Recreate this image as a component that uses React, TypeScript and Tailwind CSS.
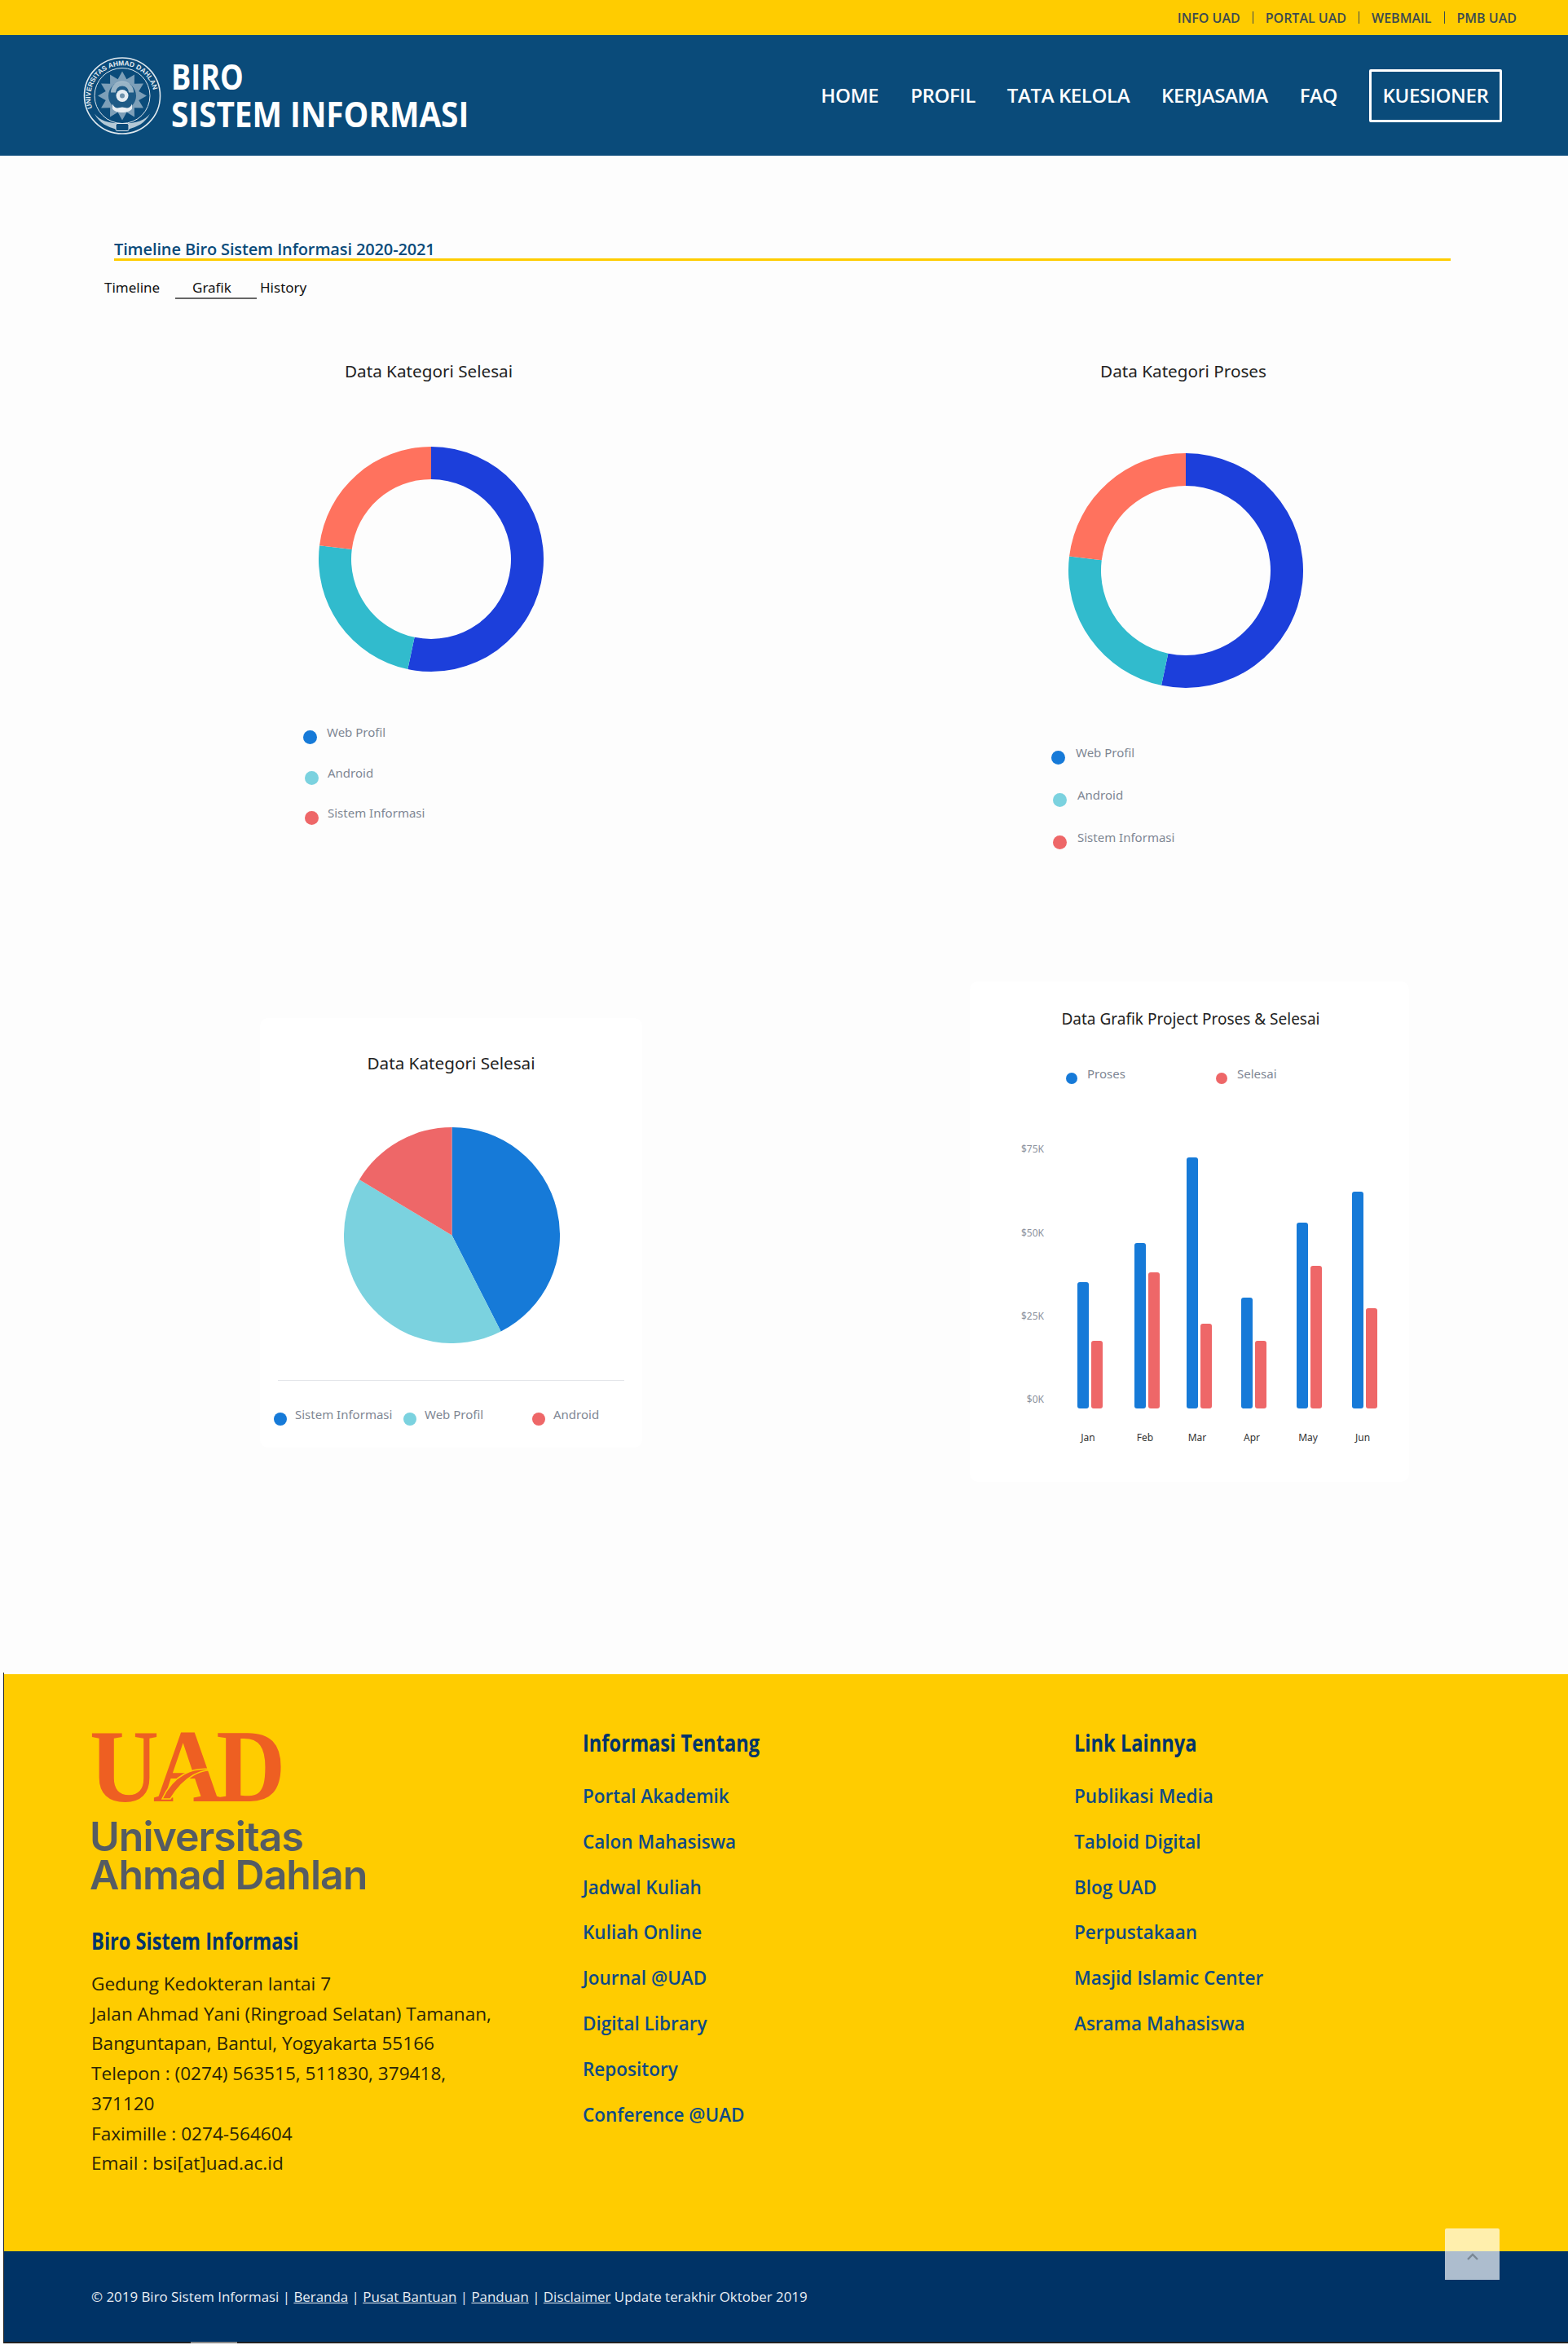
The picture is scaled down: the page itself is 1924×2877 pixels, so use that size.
const topLinks = ['INFO UAD', 'PORTAL UAD', 'WEBMAIL', 'PMB UAD'];
const navItems = ['HOME', 'PROFIL', 'TATA KELOLA', 'KERJASAMA', 'FAQ'];
const infoLinks = ['Portal Akademik', 'Calon Mahasiswa', 'Jadwal Kuliah', 'Kuliah Online', 'Journal @UAD', 'Digital Library', 'Repository', 'Conference @UAD'];
const otherLinks = ['Publikasi Media', 'Tabloid Digital', 'Blog UAD', 'Perpustakaan', 'Masjid Islamic Center', 'Asrama Mahasiswa'];
const addressLines = [
  'Gedung Kedokteran lantai 7',
  'Jalan Ahmad Yani (Ringroad Selatan) Tamanan,',
  'Banguntapan, Bantul, Yogyakarta 55166',
  'Telepon : (0274) 563515, 511830, 379418,',
  '371120',
  'Faximille : 0274-564604',
  'Email : bsi[at]uad.ac.id',
];

const BLUE = '#167ad8';
const TEAL = '#7bd2df';
const RED = '#ee6768';

const bars = [
  { month: 'Jan', labelX: 1335, blueX: 1322, blueTop: 1573, redX: 1339, redTop: 1645 },
  { month: 'Feb', labelX: 1405, blueX: 1392, blueTop: 1525, redX: 1409, redTop: 1561 },
  { month: 'Mar', labelX: 1469, blueX: 1456, blueTop: 1420, redX: 1473, redTop: 1624 },
  { month: 'Apr', labelX: 1536, blueX: 1523, blueTop: 1592, redX: 1540, redTop: 1645 },
  { month: 'May', labelX: 1605, blueX: 1591, blueTop: 1500, redX: 1608, redTop: 1553 },
  { month: 'Jun', labelX: 1672, blueX: 1659, blueTop: 1462, redX: 1676, redTop: 1605 },
];

function polar(c: number, r: number, deg: number) {
  const a = ((deg - 90) * Math.PI) / 180;
  return [c + r * Math.cos(a), c + r * Math.sin(a)];
}

function ringPath(c: number, outer: number, inner: number, from: number, to: number) {
  const large = to - from > 180 ? 1 : 0;
  const [x1, y1] = polar(c, outer, from);
  const [x2, y2] = polar(c, outer, to);
  const [x3, y3] = polar(c, inner, to);
  const [x4, y4] = polar(c, inner, from);
  if (inner === 0) return `M${c} ${c}L${x1} ${y1}A${outer} ${outer} 0 ${large} 1 ${x2} ${y2}Z`;
  return `M${x1} ${y1}A${outer} ${outer} 0 ${large} 1 ${x2} ${y2}L${x3} ${y3}A${inner} ${inner} 0 ${large} 0 ${x4} ${y4}Z`;
}

function Donut({ size, inner }: { size: number; inner: number }) {
  const c = size / 2;
  return (
    <svg width={size} height={size} viewBox={`0 0 ${size} ${size}`} className="block">
      <path d={ringPath(c, c, inner, 0, 192)} fill="#1c3fdb" />
      <path d={ringPath(c, c, inner, 192, 277)} fill="#31bbcd" />
      <path d={ringPath(c, c, inner, 277, 360)} fill="#ff725e" />
    </svg>
  );
}

function LegendText({ children }: { children: string }) {
  return <span className="text-[15px] leading-[24px] text-[#7f8794] whitespace-nowrap">{children}</span>;
}

function Seal() {
  const star = [];
  for (let i = 0; i < 24; i++) {
    const [x, y] = polar(48, i % 2 === 0 ? 30 : 21, i * 15);
    star.push(`${x},${y}`);
  }
  return (
    <svg width="96" height="97" viewBox="0 0 96 96" className="shrink-0">
      <defs>
        <path id="sealArc" d="M12.5 66A39 39 0 1 1 83.5 66" />
      </defs>
      <circle cx="48" cy="48" r="46.5" fill="none" stroke="#dfe8ee" strokeWidth="1.6" />
      <circle cx="48" cy="48" r="34" fill="none" stroke="#dfe8ee" strokeWidth="1" />
      <text fill="#e6edf2" className="text-[8.4px] font-bold" style={{ fontFamily: '"Liberation Sans", sans-serif' }}>
        <textPath href="#sealArc" startOffset="2%">UNIVERSITAS AHMAD DAHLAN</textPath>
      </text>
      <polygon points={star.join(' ')} fill="#c9d7e1" opacity="0.6" />
      <circle cx="48" cy="48" r="17" fill="#1d5a86" />
      <path d="M34 44A14 14 0 0 1 62 44L56 44A8 8 0 0 0 40 44Z" fill="#b9cad6" opacity="0.8" />
      <circle cx="48" cy="48" r="7.5" fill="#e6edf2" />
      <circle cx="48" cy="48" r="3" fill="#6f93ac" />
      <path d="M36 58C40 66 44 62 48 62C52 62 56 66 60 58L60 64C56 70 40 70 36 64Z" fill="#e6edf2" />
      <path d="M14 70C20 82 30 86 40 89L56 89C66 86 76 82 82 70C76 78 66 82 48 82C30 82 20 78 14 70Z" fill="#dfe8ee" opacity="0.8" />
      <rect x="40" y="82" width="16" height="9" rx="2" fill="#0a4b7a" stroke="#dfe8ee" strokeWidth="1" />
    </svg>
  );
}

export default function App() {
  return (
    <div className="relative w-[1924px] h-[2877px] overflow-hidden bg-white" style={{ fontFamily: '"Open Sans", sans-serif' }}>
      {/* top strip */}
      <div className="h-[43px] bg-[#ffcc00] flex items-center justify-end pr-[63px]">
        {topLinks.map((link, i) => (
          <div key={link} className="flex items-center">
            {i > 0 && <span className="mx-[15px] h-[15px] w-px bg-[#3c4a50]" />}
            <a className="text-[16px] font-semibold leading-none text-[#3c4a50] whitespace-nowrap">{link}</a>
          </div>
        ))}
      </div>

      {/* header */}
      <header className="h-[148px] bg-[#0a4b7a] flex items-center pl-[102px] pr-[81px]">
        <Seal />
        <div className="ml-[12px] text-white font-bold text-[43px] leading-[46px]">
          <div className="origin-left scale-x-[0.84] whitespace-nowrap">BIRO</div>
          <div className="origin-left scale-x-[0.9] whitespace-nowrap">SISTEM INFORMASI</div>
        </div>
        <nav className="ml-auto flex items-center gap-[39px] text-white text-[24px] font-semibold tracking-[-0.4px]">
          {navItems.map((item) => (
            <a key={item} className="whitespace-nowrap">{item}</a>
          ))}
          <a className="h-[65px] w-[163px] flex items-center justify-center border-[3px] border-white rounded-[2px] whitespace-nowrap">KUESIONER</a>
        </nav>
      </header>

      {/* content */}
      <main className="h-[1861px] bg-[#fdfdfd] pt-[103px]">
        <div className="ml-[140px] w-[1640px] border-b-[3px] border-[#ffcc00] text-[20px] leading-[23px] font-semibold tracking-[-0.13px] text-[#0a4b7a]">
          Timeline Biro Sistem Informasi 2020-2021
        </div>

        <div style={{ fontFamily: '"Noto Sans", sans-serif' }}>
          <div className="mt-[20px] ml-[128px] flex h-[27px] text-[17px] leading-[26px] text-[#111]">
            <span className="w-[87px]">Timeline</span>
            <span className="w-[100px] pl-[21px] border-b-2 border-[#666]">Grafik</span>
            <span className="ml-[4px]">History</span>
          </div>

          <div className="flex pl-[126px]">
            <section className="w-[800px] mr-[126px]">
              <h3 className="mt-[74px] text-center text-[20.7px] leading-[28px] text-[#222]">Data Kategori Selesai</h3>
              <div className="mt-[79px] ml-[265px]">
                <Donut size={276} inner={98} />
              </div>
              <ul className="mt-[62px] flex flex-col gap-[25.5px]">
                <li className="flex h-[24px] ml-[246px]">
                  <span className="mt-[10px] mr-[12px] size-[17px] rounded-full" style={{ background: BLUE }} />
                  <LegendText>Web Profil</LegendText>
                </li>
                <li className="flex h-[24px] ml-[248px]">
                  <span className="mt-[10px] mr-[11px] size-[17px] rounded-full" style={{ background: TEAL }} />
                  <LegendText>Android</LegendText>
                </li>
                <li className="flex h-[24px] ml-[248px]">
                  <span className="mt-[10px] mr-[11px] size-[17px] rounded-full" style={{ background: RED }} />
                  <LegendText>Sistem Informasi</LegendText>
                </li>
              </ul>
            </section>

            <section className="w-[800px]">
              <h3 className="mt-[74px] text-center text-[20.7px] leading-[28px] text-[#222]">Data Kategori Proses</h3>
              <div className="mt-[87px] ml-[259px]">
                <Donut size={288} inner={104} />
              </div>
              <ul className="mt-[67px] flex flex-col gap-[28px]">
                <li className="flex h-[24px] ml-[238px]">
                  <span className="mt-[10px] mr-[13px] size-[17px] rounded-full" style={{ background: BLUE }} />
                  <LegendText>Web Profil</LegendText>
                </li>
                <li className="flex h-[24px] ml-[240px]">
                  <span className="mt-[10px] mr-[13px] size-[17px] rounded-full" style={{ background: TEAL }} />
                  <LegendText>Android</LegendText>
                </li>
                <li className="flex h-[24px] ml-[240px]">
                  <span className="mt-[10px] mr-[13px] size-[17px] rounded-full" style={{ background: RED }} />
                  <LegendText>Sistem Informasi</LegendText>
                </li>
              </ul>
            </section>
          </div>

          <div className="mt-[165px] flex items-start pl-[319px]">
            <section className="mt-[45px] w-[469px] h-[527px] bg-white rounded-[10px] pt-[41px]">
              <h3 className="text-center text-[20.7px] leading-[28px] text-[#222]">Data Kategori Selesai</h3>
              <svg width="265" height="265" viewBox="0 0 265 265" className="block mt-[65px] ml-[103px]">
                <path d={ringPath(132.5, 132.5, 0, 0, 153)} fill={BLUE} />
                <path d={ringPath(132.5, 132.5, 0, 153, 301)} fill={TEAL} />
                <path d={ringPath(132.5, 132.5, 0, 301, 360)} fill={RED} />
              </svg>
              <div className="mt-[45px] ml-[22px] w-[425px] h-px bg-[#e2e4e8]" />
              <div className="mt-[29px] ml-[17px] flex">
                <div className="flex w-[159px]">
                  <span className="mt-[10px] mr-[10px] size-[16px] rounded-full" style={{ background: BLUE }} />
                  <LegendText>Sistem Informasi</LegendText>
                </div>
                <div className="flex w-[158px]">
                  <span className="mt-[10px] mr-[10px] size-[16px] rounded-full" style={{ background: TEAL }} />
                  <LegendText>Web Profil</LegendText>
                </div>
                <div className="flex">
                  <span className="mt-[10px] mr-[10px] size-[16px] rounded-full" style={{ background: RED }} />
                  <LegendText>Android</LegendText>
                </div>
              </div>
            </section>

            <section className="ml-[402px] w-[539px] h-[614px] bg-white rounded-[10px] pt-[32px]">
              <h3 className="text-center text-[19px] leading-[28px] text-[#222] pl-[3px]">Data Grafik Project Proses &amp; Selesai</h3>
              <div className="mt-[41px] ml-[118px] flex h-[24px]">
                <div className="flex w-[184px]">
                  <span className="mt-[11px] mr-[12px] size-[14px] rounded-full" style={{ background: BLUE }} />
                  <LegendText>Proses</LegendText>
                </div>
                <div className="flex">
                  <span className="mt-[11px] mr-[12px] size-[14px] rounded-full" style={{ background: RED }} />
                  <LegendText>Selesai</LegendText>
                </div>
              </div>
              <svg width="539" height="390" viewBox="1190 1390 539 390" className="block mt-[61px]">
                {[['$75K', 1410], ['$50K', 1513], ['$25K', 1615], ['$0K', 1717]].map(([label, y]) => (
                  <text key={label} x="1281" y={Number(y) + 4} textAnchor="end" fontSize="12" fill="#8b919c">{label}</text>
                ))}
                {bars.map((b) => (
                  <g key={b.month}>
                    <rect x={b.blueX} y={b.blueTop} width="14" height={1728 - b.blueTop} rx="3" fill={BLUE} />
                    <rect x={b.redX} y={b.redTop} width="14" height={1728 - b.redTop} rx="3" fill={RED} />
                    <text x={b.labelX} y="1768" textAnchor="middle" fontSize="12" fill="#333">{b.month}</text>
                  </g>
                ))}
              </svg>
            </section>
          </div>
        </div>
      </main>

      {/* footer */}
      <footer className="ml-[4px] border-l border-[#222] pt-[2px] bg-white">
        <div className="h-[708px] bg-[#ffcc00] pt-[66px] pl-[107px] grid grid-cols-[603px_603px_1fr]">
          <div>
            <div className="relative mt-[5px] h-[85px] w-[240px]">
              <div className="-ml-[2px] origin-left scale-x-[0.92] whitespace-nowrap font-bold text-[#ee5f22] text-[128px] leading-[85px] tracking-[-8px]" style={{ fontFamily: '"Liberation Serif", serif' }}>
                UAD
              </div>
              <svg width="76" height="46" viewBox="0 0 76 46" className="absolute left-[85px] top-[38px]">
                <path d="M2 44C14 18 38 0 74 10C50 4 28 18 12 44Z" fill="#ee5f22" stroke="#ffcc00" strokeWidth="1.5" />
              </svg>
            </div>
            <div className="-ml-[2px] mt-[20px] text-[50px] leading-[47px] font-semibold tracking-[-1px] text-[#555c63] whitespace-nowrap" style={{ fontFamily: 'Inter, sans-serif' }}>
              <div>Universitas</div>
              <div>Ahmad Dahlan</div>
            </div>
            <h4 className="mt-[39px] origin-left scale-x-[0.815] whitespace-nowrap text-[29px] leading-[36px] font-bold text-[#00346b]">Biro Sistem Informasi</h4>
            <div className="mt-[17px] text-[#2a2408] text-[22.6px] leading-[36.7px]">
              {addressLines.map((line) => (
                <div key={line} className="whitespace-nowrap">{line}</div>
              ))}
            </div>
          </div>

          <div>
            <h4 className="origin-left scale-x-[0.815] whitespace-nowrap text-[29px] leading-[36px] font-bold text-[#00346b]">Informasi Tentang</h4>
            <ul className="mt-[20px]">
              {infoLinks.map((link) => (
                <li key={link} className="h-[55.8px] flex items-center text-[22.5px] font-semibold text-[#0d4a86] whitespace-nowrap">{link}</li>
              ))}
            </ul>
          </div>

          <div>
            <h4 className="origin-left scale-x-[0.815] whitespace-nowrap text-[29px] leading-[36px] font-bold text-[#00346b]">Link Lainnya</h4>
            <ul className="mt-[20px]">
              {otherLinks.map((link) => (
                <li key={link} className="h-[55.8px] flex items-center text-[22.5px] font-semibold text-[#0d4a86] whitespace-nowrap">{link}</li>
              ))}
            </ul>
          </div>
        </div>

        <div className="h-[111px] bg-[#003366] pl-[107px] flex items-center text-[16.9px] text-[#e8eef4] whitespace-nowrap">
          <span>
            © 2019 Biro Sistem Informasi | <a className="underline">Beranda</a> | <a className="underline">Pusat Bantuan</a> | <a className="underline">Panduan</a> | <a className="underline">Disclaimer</a> Update terakhir Oktober 2019
          </span>
        </div>
        <div className="h-[2px] bg-[#222]">
          <div className="ml-[229px] w-[57px] h-full bg-[#8a8a8a]" />
        </div>
      </footer>

      {/* back to top */}
      <a className="absolute left-[1773px] top-[2734px] w-[67px] h-[63px] bg-white/[0.68] rounded-t-[2px] flex justify-center pt-[30px]">
        <svg width="14" height="10" viewBox="0 0 14 10" className="block">
          <path d="M1 8L7 2L13 8" fill="none" stroke="#7a8794" strokeWidth="2.4" />
        </svg>
      </a>
    </div>
  );
}
